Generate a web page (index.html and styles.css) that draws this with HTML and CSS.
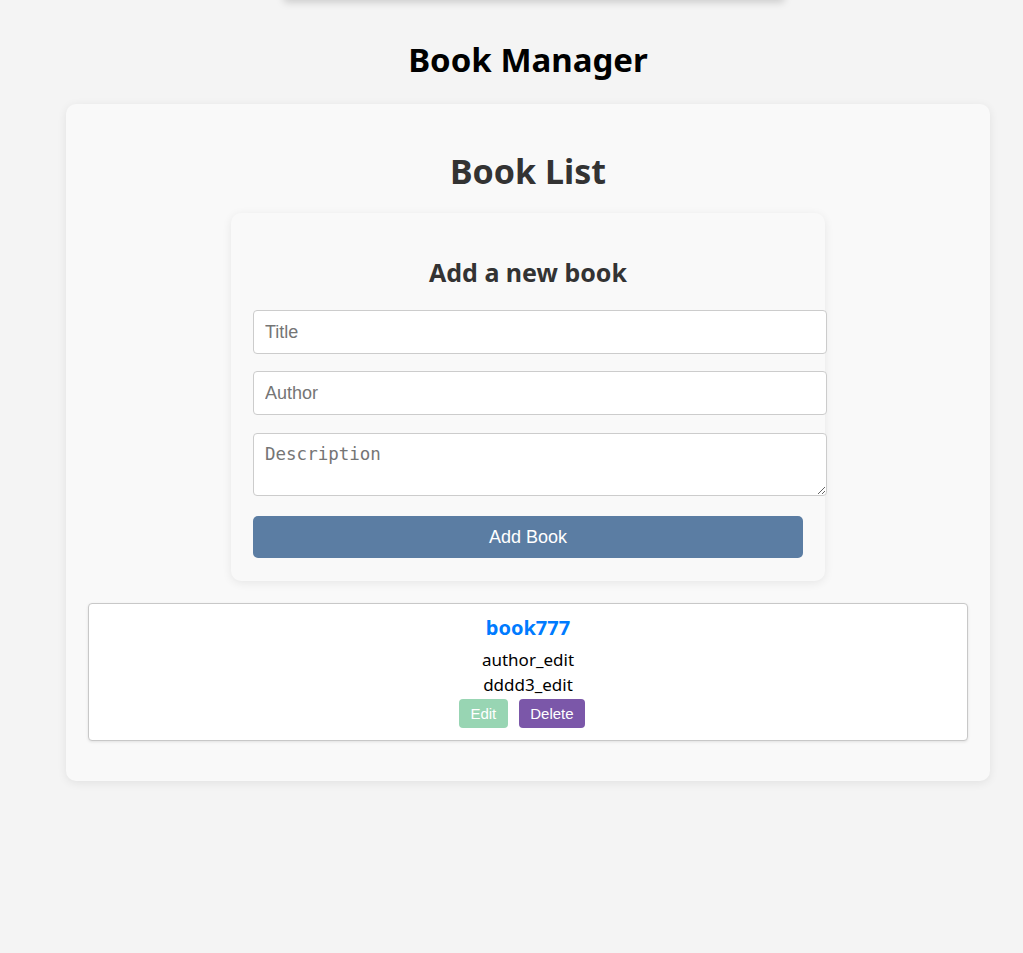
FILE: index.html
```html
<!DOCTYPE html>
<html lang="en">
<head>
<meta charset="utf-8">
<title>Book Manager</title>
<link rel="stylesheet" href="styles.css">
</head>
<body>
<div class="page">
  <div class="topbar"></div>
  <h1 class="app-title">Book Manager</h1>
  <main class="container">
    <h2 class="list-title">Book List</h2>
    <form class="form-card">
      <h3 class="form-title">Add a new book</h3>
      <input class="field" type="text" placeholder="Title">
      <input class="field field-last" type="text" placeholder="Author">
      <textarea class="field area" placeholder="Description"></textarea>
      <button class="add-btn" type="button">Add Book</button>
    </form>
    <div class="book">
      <h4 class="book-title">book777</h4>
      <p class="book-line">author_edit</p>
      <p class="book-line">dddd3_edit</p>
      <div class="actions">
        <button class="btn edit" type="button">Edit</button>
        <button class="btn delete" type="button">Delete</button>
      </div>
    </div>
  </main>
</div>
</body>
</html>
```

FILE: styles.css
```css
html, body {
  margin: 0;
  padding: 0;
}
body {
  background: #f4f4f4;
  font-family: "Noto Sans", "DejaVu Sans", sans-serif;
  color: #000;
}
.page {
  padding-left: 33px;
  padding-bottom: 40px;
}
.topbar {
  width: 500px;
  height: 40px;
  margin-top: -40px;
  margin-left: 251px;
  background: #f4f4f4;
  box-shadow: 0 2px 8px rgba(0,0,0,0.18);
}
.app-title {
  margin: 38px 0 0;
  text-align: center;
  font-size: 33px;
  font-weight: 700;
  line-height: 44px;
}
.container {
  width: 924px;
  box-sizing: border-box;
  margin: 22px auto 0;
  background: #f9f9f9;
  border-radius: 10px;
  box-shadow: 0 2px 10px rgba(0,0,0,0.08);
  padding: 44px 22px 40px;
}
.list-title {
  margin: 0 0 19px;
  text-align: center;
  font-size: 34px;
  line-height: 46px;
  font-weight: 700;
  color: #333;
}
.form-card {
  width: 594px;
  box-sizing: border-box;
  margin: 0 auto 22px;
  padding: 22px 22px 23px;
  background: #f9f9f9;
  border-radius: 10px;
  box-shadow: 0 2px 10px rgba(0,0,0,0.08);
  display: flex;
  flex-direction: column;
}
.form-title {
  margin: 21px 0 22px;
  text-align: center;
  font-size: 25px;
  line-height: 32px;
  font-weight: 700;
  color: #333;
}
.field {
  width: calc(100% + 24px);
  box-sizing: border-box;
  height: 44px;
  padding: 12px 11px;
  margin: 0 0 17px;
  border: 1px solid #ccc;
  border-radius: 4px;
  background: #fff;
  font-family: "Liberation Sans Narrow", "Liberation Sans", Arial, sans-serif;
  font-size: 18px;
  color: #333;
}
.field-last {
  margin-bottom: 18px;
}
.field::placeholder {
  color: #757575;
}
.area {
  height: 63px;
  margin-bottom: 20px;
  padding: 10px 11px;
  font-family: "DejaVu Sans Mono", monospace;
  font-size: 17.5px;
  resize: vertical;
}
.add-btn {
  width: 100%;
  height: 42px;
  border: none;
  border-radius: 5px;
  background: #5b7da3;
  color: #fff;
  font-family: "Liberation Sans Narrow", "Liberation Sans", Arial, sans-serif;
  font-size: 18px;
}
.book {
  background: #fff;
  border: 1px solid #c8c8c8;
  border-radius: 4px;
  box-shadow: 0 1px 3px rgba(0,0,0,0.1);
  padding: 10px 10px 12px;
  text-align: center;
}
.book-title {
  margin: 0 0 5px;
  font-size: 20px;
  line-height: 28px;
  font-weight: 700;
  color: #007bff;
}
.book-line {
  margin: 0;
  font-size: 17px;
  line-height: 25px;
}
.actions {
  display: flex;
  justify-content: center;
  gap: 11px;
  margin-top: 2px;
  padding-right: 12px;
}
.btn {
  height: 29px;
  padding: 0 11.5px;
  border: none;
  border-radius: 4px;
  color: #fff;
  font-family: "Liberation Sans", Arial, sans-serif;
  font-size: 15px;
}
.edit {
  background: #98d5b3;
}
.delete {
  background: #7b57a9;
}
```
